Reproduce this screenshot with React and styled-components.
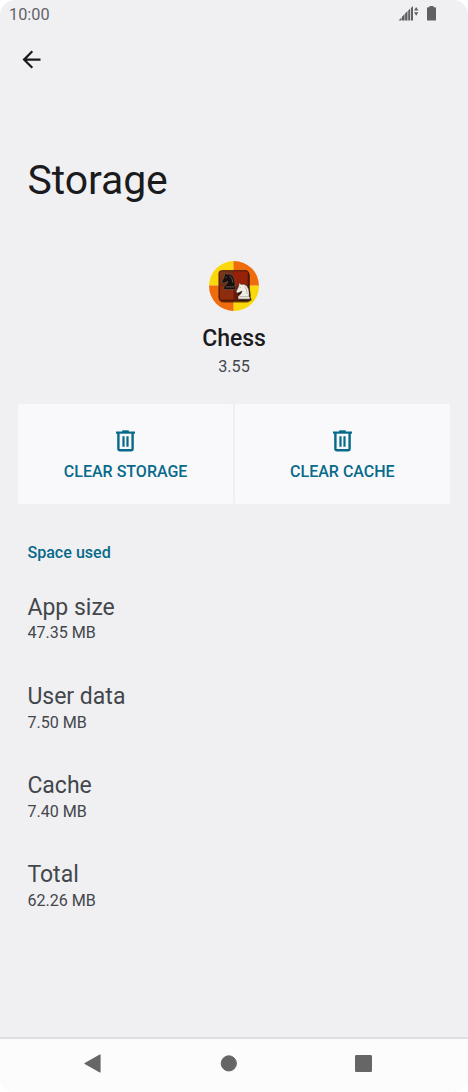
import React from 'react';
import styled, { createGlobalStyle } from 'styled-components';

const GlobalStyle = createGlobalStyle`
  * { box-sizing: border-box; }
  body {
    margin: 0;
    background: #fff;
    font-family: Roboto, "Liberation Sans", sans-serif;
  }
  svg { display: block; }
`;

const Screen = styled.div`
  display: flex;
  flex-direction: column;
  width: 468px;
  height: 1092px;
  background: #f0f0f3;
  border-radius: 15px;
  overflow: hidden;
`;

const StatusBar = styled.div`
  display: flex;
  justify-content: space-between;
  height: 28px;
  padding: 0 30px 0 9px;
`;

const Clock = styled.span`
  font-size: 16.3px;
  line-height: 29px;
  color: #636366;
`;

const Toolbar = styled.div`
  height: 129px;
  padding: 17.5px 0 0 18px;
`;

const Title = styled.h1`
  margin: 0;
  padding-left: 27.5px;
  font-size: 41px;
  font-weight: 400;
  line-height: 47px;
  letter-spacing: -0.1px;
  color: #1b1b1e;
`;

const AppHeader = styled.div`
  display: flex;
  flex-direction: column;
  align-items: center;
  height: 200px;
  padding-top: 56.5px;
`;

const AppName = styled.div`
  margin-top: 14.5px;
  font-size: 23px;
  font-weight: 500;
  line-height: 28px;
  letter-spacing: -0.1px;
  color: #1b1b1e;
`;

const Version = styled.div`
  margin-top: 4px;
  font-size: 16.2px;
  line-height: 20px;
  color: #43474b;
`;

const Actions = styled.div`
  display: flex;
  gap: 1.5px;
  height: 100px;
  margin: 0 18px;
`;

const ActionButton = styled.button`
  display: flex;
  flex: 1;
  flex-direction: column;
  align-items: center;
  padding: 23px 0 0;
  border: 0;
  border-radius: 2px;
  background: #f9f9fc;
  color: #076a8a;
  font: 500 16px/20px Roboto, sans-serif;
  text-transform: uppercase;

  span { margin-top: 8px; }
`;

const Usage = styled.div`
  flex: 1;
  padding: 39px 27.4px 0;
`;

const SectionLabel = styled.div`
  font-size: 16.1px;
  font-weight: 500;
  line-height: 20px;
  color: #076a8a;
  margin-bottom: 30.5px;
`;

const UsageRow = styled.div`
  height: 89.3px;
`;

const RowTitle = styled.div`
  font-size: 23px;
  line-height: 28px;
  color: #43474b;
`;

const RowValue = styled.div`
  margin-top: -0.3px;
  font-size: 16.1px;
  line-height: 24px;
  color: #43474b;
`;

const NavBar = styled.div`
  height: 55px;
  padding-top: 14px;
  border-top: 2px solid #dfdfe0;
  background: #fcfcfc;
`;

const BackIcon = () => (
  <svg width="27" height="27" viewBox="0 0 24 24" fill="#1b1b1e">
    <path d="M20 11H7.83l5.59-5.59L12 4l-8 8 8 8 1.41-1.41L7.83 13H20v-2z" />
  </svg>
);

const TrashIcon = () => (
  <svg width="27" height="27" viewBox="0 0 27 27" fill="none" stroke="currentColor">
    <path d="M4 5.6h19" strokeWidth="2.2" />
    <path d="M10.2 4.2h6.6" strokeWidth="1.8" />
    <path d="M6.4 6v16.1q0 1.1 1.1 1.1h12q1.1 0 1.1-1.1V6" strokeWidth="2.4" />
    <path d="M11.5 9.3v10.4M15.5 9.3v10.4" strokeWidth="2.2" />
  </svg>
);

const StatusIcons = () => (
  <svg width="40" height="28" viewBox="0 0 40 28" fill="#606062">
    <path d="M.5 20.5l3-3v3zM4 20.5v-3.8l2.6-2.6v6.4zM7.1 20.5v-7l2.4-2.4v9.4zM10.2 20.5v-10l2-2v12zM13 20.5V7.9l2-2v14.6z" />
    <path d="M18.2 7l2.2 3.6H16zM18.2 15.8l2.2-3.6H16z" />
    <path d="M31.5 6h4v1.3h1.7q.8 0 .8.8v11.6q0 .9-.8.9h-7.4q-.8 0-.8-.9V8.1q0-.8.8-.8h1.7z" />
  </svg>
);

const knight =
  'M2.4 15.8V13.4L5.4 10.4 6.4 8.2 3.6 9.6 1.5 10.2.5 8.5 2.2 5.3 3.2 2.9 3.3.3 5.4 1.8 8.7 1.7 11.6 3.6 13.2 6.8 13.7 10.8 13.4 13.3 14.4 13.8V15.8z';

const ChessIcon = () => (
  <svg width="50" height="50" viewBox="0 0 50 50">
    <defs>
      <clipPath id="disc"><circle cx="25" cy="25" r="25" /></clipPath>
      <linearGradient id="board" x1="0" y1="0" x2="1" y2="1">
        <stop offset="0" stopColor="#7d3a20" />
        <stop offset="0.5" stopColor="#6e1f0c" />
        <stop offset="1" stopColor="#5a1708" />
      </linearGradient>
    </defs>
    <g clipPath="url(#disc)">
      <path fill="#fbd80b" d="M0 0h24.5v24.5H0zM24.5 24.5H50V50H24.5z" />
      <path fill="#ee6c0b" d="M24.5 0H50v24.5H24.5zM0 24.5h24.5V50H0z" />
      <rect x="11" y="11.5" width="30" height="30" rx="3" fill="#3c1207" opacity="0.75" />
      <rect x="10" y="9.7" width="29.5" height="30" rx="2.5" fill="url(#board)" stroke="#4b170a" />
      <path fill="#8d2c0e" d="M11 25h13.5v13.5H12q-1 0-1-1z" />
      <path fill="#972208" d="M24.5 10.5h12.7q1.3 0 1.3 1V25h-14z" />
    </g>
    <g transform="translate(12.4 11.2) scale(1 1.1)">
      <path d={knight} fill="#18100e" stroke="#866455" strokeWidth="0.5" />
      <path d="M4.5 13.4h8M8 3.5l2.5 2 1 4M4 5l1.2-.5" fill="none" stroke="#8d7b72" strokeWidth="0.6" />
    </g>
    <path transform="translate(28 23) scale(1 1.06)" d={knight} fill="#1c0d07" opacity="0.85" />
    <g transform="translate(26.6 21.4) scale(1 1.06)">
      <path d={knight} fill="#f0ede5" stroke="#3c2a20" strokeWidth="0.6" />
      <path d="M4 13.4h9M9 4l2 3 .5 4M4 5l1.2-.4" fill="none" stroke="#9d9487" strokeWidth="0.6" />
    </g>
  </svg>
);

const NavIcons = () => (
  <svg width="468" height="22" viewBox="0 0 468 22" fill="#666" stroke="#666" strokeLinejoin="round">
    <path d="M85 10.5L100 2v17z" strokeWidth="1.2" />
    <circle cx="228.8" cy="10.4" r="7.6" />
    <rect x="355.5" y="2.5" width="16" height="16" rx="0.5" />
  </svg>
);

const usage = [
  ['App size', '47.35 MB'],
  ['User data', '7.50 MB'],
  ['Cache', '7.40 MB'],
  ['Total', '62.26 MB'],
];

export default function App() {
  return (
    <Screen>
      <GlobalStyle />
      <StatusBar>
        <Clock>10:00</Clock>
        <StatusIcons />
      </StatusBar>
      <Toolbar>
        <BackIcon />
      </Toolbar>
      <Title>Storage</Title>
      <AppHeader>
        <ChessIcon />
        <AppName>Chess</AppName>
        <Version>3.55</Version>
      </AppHeader>
      <Actions>
        <ActionButton>
          <TrashIcon />
          <span>Clear storage</span>
        </ActionButton>
        <ActionButton>
          <TrashIcon />
          <span>Clear cache</span>
        </ActionButton>
      </Actions>
      <Usage>
        <SectionLabel>Space used</SectionLabel>
        {usage.map(([title, value]) => (
          <UsageRow key={title}>
            <RowTitle>{title}</RowTitle>
            <RowValue>{value}</RowValue>
          </UsageRow>
        ))}
      </Usage>
      <NavBar>
        <NavIcons />
      </NavBar>
    </Screen>
  );
}
